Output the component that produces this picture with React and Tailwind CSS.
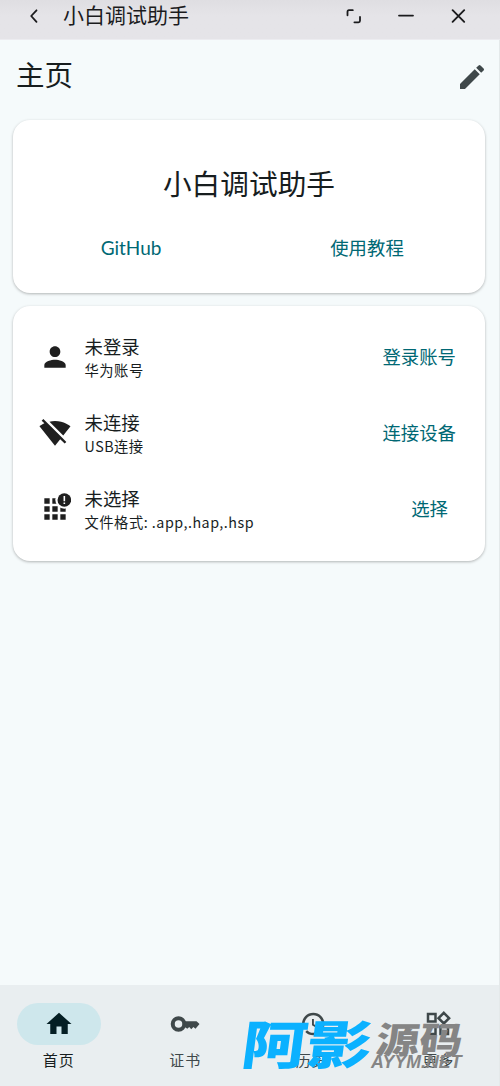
const HomeIcon = () => (
  <svg className="h-[30px] w-[30px]" viewBox="0 0 24 24" fill="#041f24">
    <path d="M10 20v-6h4v6h5v-8h3L12 3 2 12h3v8z" />
  </svg>
);

const KeyIcon = () => (
  <svg className="h-[30px] w-[30px]" viewBox="0 0 24 24" fill="none" stroke="#3f484a">
    <circle cx="6.8" cy="12" r="4.6" strokeWidth="3.2" />
    <path d="M11.4 9.8H21.2L23.6 12 20.4 15.8l-1.7-1.5-1.7 1.9-1.6-1.9-1.6 1.5L11.4 14z" fill="#3f484a" stroke="none" />
  </svg>
);

const HistoryIcon = () => (
  <svg className="h-[30px] w-[30px]" viewBox="0 0 24 24" fill="#3f484a">
    <path d="M13 3a9 9 0 0 0-9 9H1l3.89 3.89.07.14L9 12H6c0-3.87 3.13-7 7-7s7 3.13 7 7-3.13 7-7 7c-1.93 0-3.68-.79-4.94-2.06l-1.42 1.42A8.95 8.95 0 0 0 13 21a9 9 0 0 0 0-18zm-1 5v5l4.28 2.54.72-1.21-3.5-2.08V8H12z" />
  </svg>
);

const WidgetsIcon = () => (
  <svg className="h-[30px] w-[30px]" viewBox="0 0 24 24" fill="none" stroke="#3f484a" strokeWidth="2">
    <path d="M4 4h6v6H4zM4 14h6v6H4zM14 14h6v6h-6zM16.66 3.1l4.24 4.24-4.24 4.24-4.24-4.24z" />
  </svg>
);

const PersonIcon = () => (
  <svg className="h-8 w-8" viewBox="0 0 24 24" fill="#1f1f1f">
    <path d="M12 12c2.21 0 4-1.79 4-4s-1.79-4-4-4-4 1.79-4 4 1.79 4 4 4zm0 2c-2.67 0-8 1.34-8 4v2h16v-2c0-2.66-5.33-4-8-4z" />
  </svg>
);

const WifiOffIcon = () => (
  <svg className="h-8 w-8" viewBox="0 0 24 24" fill="#1f1f1f">
    <path d="M23.64 7c-.45-.34-4.93-4-11.64-4-1.5 0-2.89.19-4.15.48L18.18 13.8 23.64 7zm-6.6 8.22L3.27 1.44 2 2.72l2.05 2.06C1.91 5.76.59 6.82.36 7l11.63 14.49.01.01.01-.01 3.9-4.86 3.32 3.32 1.27-1.27-3.46-3.46z" />
  </svg>
);

const AppsAlertIcon = () => (
  <svg className="h-8 w-8" viewBox="0 0 24 24" fill="#1f1f1f">
    <path d="M4 4h4v4H4zM10 4h4v4h-4zM4 10h4v4H4zM10 10h4v4h-4zM16 10h4v4h-4zM4 16h4v4H4zM10 16h4v4h-4zM16 16h4v4h-4z" />
    <circle cx="19" cy="5" r="6.8" fill="#fff" />
    <circle cx="19" cy="5.2" r="5.1" />
    <path d="M18.4 2.2h1.2v4h-1.2zM18.4 7.1h1.2v1.2h-1.2z" fill="#fff" />
  </svg>
);

const PencilIcon = () => (
  <svg className="h-8 w-8" viewBox="0 0 24 24" fill="#3f484a">
    <path d="M3 17.25V21h3.75L17.81 9.94l-3.75-3.75L3 17.25zM20.71 7.04a1 1 0 0 0 0-1.41l-2.34-2.34a1 1 0 0 0-1.41 0l-1.83 1.83 3.75 3.75 1.83-1.83z" />
  </svg>
);

const TitleBar = () => (
  <header className="flex h-10 items-start border-b border-[#ececf0] bg-gradient-to-b from-[#dfdee2] to-[#e5e4e8] to-40% text-[#1b1b1d]">
    <svg className="mt-2 ml-[26px] h-4 w-4" viewBox="0 0 16 16" fill="none" stroke="currentColor" strokeWidth="1.8" strokeLinecap="round" strokeLinejoin="round">
      <path d="M10.5 2.3 5.2 8l5.3 5.9" />
    </svg>
    <span className="ml-[21px] text-[21px] leading-[28px]">小白调试助手</span>
    <div className="mt-2 mr-[34px] ml-auto flex gap-9">
      <svg className="h-4 w-4" viewBox="0 0 16 16" fill="none" stroke="currentColor" strokeWidth="1.8" strokeLinecap="round">
        <path d="M1.5 7.3V3.7Q1.5 2.2 3 2.2H6.8M14 9v3.8q0 1.5-1.5 1.5H8.4" />
      </svg>
      <svg className="h-4 w-4" viewBox="0 0 16 16" fill="none" stroke="currentColor" strokeWidth="1.8" strokeLinecap="round">
        <path d="M1 7.6h14" />
      </svg>
      <svg className="h-4 w-4" viewBox="0 0 16 16" fill="none" stroke="currentColor" strokeWidth="1.9" strokeLinecap="round">
        <path d="m2.6 2.2 11.6 11.6M14.2 2.2 2.6 13.8" />
      </svg>
    </div>
  </header>
);

const rows = [
  { icon: <PersonIcon />, title: "未登录", desc: "华为账号", action: "登录账号", pad: "pr-[29px]" },
  { icon: <WifiOffIcon />, title: "未连接", desc: "USB连接", action: "连接设备", pad: "pr-[29px]" },
  { icon: <AppsAlertIcon />, title: "未选择", desc: "文件格式: .app,.hap,.hsp", action: "选择", pad: "pr-[37px]" },
];

const tabs = [
  { icon: <HomeIcon />, label: "首页", active: true },
  { icon: <KeyIcon />, label: "证书" },
  { icon: <HistoryIcon />, label: "历史" },
  { icon: <WidgetsIcon />, label: "更多" },
];

const cardClass = "rounded-[17px] bg-white shadow-[0_1px_3px_rgba(0,0,0,0.28)]";

const App = () => {
  return (
    <div className="relative flex h-[1086px] w-[500px] flex-col overflow-hidden bg-[#f5fafb] font-['Noto_Sans_CJK_SC',sans-serif] text-[#171d1e]">
      <TitleBar />

      <div className="flex h-20 items-start justify-between pr-3 pl-4">
        <h1 className="mt-[13px] text-[28.5px] leading-[42px]">主页</h1>
        <div className="mt-[21px]">
          <PencilIcon />
        </div>
      </div>

      <main className="flex flex-1 flex-col gap-[13px] pr-[15px] pl-[13px]">
        <section className={`h-[173px] pt-[42px] ${cardClass}`}>
          <h2 className="text-center text-[28.7px] leading-[42px]">小白调试助手</h2>
          <div className="mt-[29px] grid grid-cols-2 text-center text-[18.4px] leading-7 text-[#006874]">
            <a className="pt-px font-['Lato','Noto_Sans_CJK_SC',sans-serif] text-[19px]">GitHub</a>
            <a>使用教程</a>
          </div>
        </section>

        <section className={`h-[255px] pt-[13px] ${cardClass}`}>
          {rows.map((row) => (
            <div key={row.title} className={`flex h-[76px] items-center pl-[26px] ${row.pad}`}>
              {row.icon}
              <div className="ml-[13.5px] flex-1">
                <div className="-mt-px text-[18.4px] leading-[26px]">{row.title}</div>
                <div className="text-[14.3px] leading-[21px] tracking-[0.5px]">{row.desc}</div>
              </div>
              <a className="text-[18.4px] text-[#006874]">{row.action}</a>
            </div>
          ))}
        </section>
      </main>

      <nav className="flex h-[101px] gap-[9px] bg-[#e9eef0] pt-[18px] pr-[3px]">
        {tabs.map(({ icon, label, active }) => (
          <div key={label} className="flex flex-1 flex-col items-center">
            <div className={`flex h-[42px] w-[84px] items-center justify-center rounded-full ${active ? "bg-[#cee7ec]" : ""}`}>
              {icon}
            </div>
            <span className={`mt-[3px] text-[15px] leading-6 tracking-[1px] ${active ? "text-[#171d1e]" : "text-[#3f484a]"}`}>
              {label}
            </span>
          </div>
        ))}
      </nav>

      {/* site stamp laid over the tab bar */}
      <div className="pointer-events-none absolute top-[1014px] left-[243px] leading-none font-black whitespace-nowrap">
        <div className="absolute top-[2px] left-[3px] origin-top-left scale-x-[1.25] -skew-x-6 text-[52px] leading-[52px] text-[#0bb1ff]">阿影</div>
        <div className="absolute top-[5px] left-[136px] origin-top-left scale-x-[1.2] -skew-x-6 text-[36px] leading-[36px] text-[#858585]">源码</div>
        <div className="absolute top-[39px] left-[128px] font-['Liberation_Sans',sans-serif] text-[17.8px] leading-[18px] text-[#858585] italic">
          AYYM.NET
        </div>
      </div>

      <div className="absolute top-10 right-0 h-[1046px] w-px bg-[#e4e9ea]" />
    </div>
  );
};

export default App;
